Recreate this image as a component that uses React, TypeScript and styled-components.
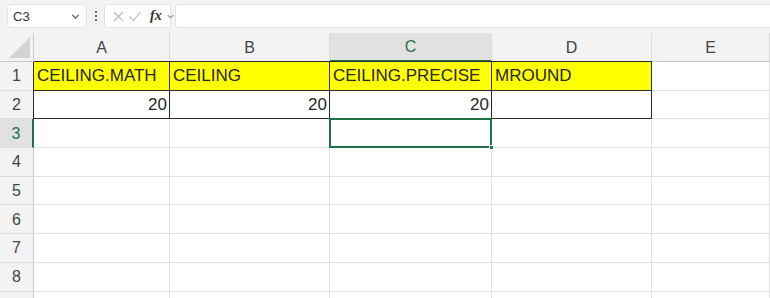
import React from "react";
import styled, { createGlobalStyle, css } from "styled-components";

const GlobalStyle = createGlobalStyle`
  html, body {
    margin: 0;
    padding: 0;
    background: #ffffff;
    font-family: "Liberation Sans", Arial, sans-serif;
    overflow: hidden;
  }
`;

const GREEN = "#1e7145";

const Page = styled.div`
  width: 770px;
  height: 298px;
  display: flex;
  flex-direction: column;
  overflow: hidden;
`;

// formula bar
const Toolbar = styled.div`
  height: 33px;
  flex: 0 0 33px;
  box-sizing: border-box;
  background: #f3f3f3;
  display: flex;
  align-items: flex-start;
  padding: 4px 0 0 7px;
`;

const NameBox = styled.div`
  width: 80px;
  height: 24px;
  box-sizing: border-box;
  background: #fff;
  border: 1px solid #e3e3e3;
  border-radius: 4px;
  display: flex;
  align-items: center;
  justify-content: space-between;
  padding: 0 5px 0 5px;
  font-size: 13px;
  color: #333;
`;

const Dots = styled.div`
  width: 17px;
  height: 24px;
  display: flex;
  flex-direction: column;
  align-items: center;
  justify-content: center;
  gap: 2px;
  span {
    width: 2px;
    height: 2px;
    border-radius: 1px;
    background: #444;
  }
`;

const FxBox = styled.div`
  width: 67px;
  height: 24px;
  box-sizing: border-box;
  background: #fff;
  border: 1px solid #e3e3e3;
  border-radius: 4px;
  display: flex;
  align-items: center;
  padding: 0 0 0 8px;
  gap: 5px;
  svg { display: block; flex: none; }
`;

const Fx = styled.span`
  font-family: "Liberation Serif", "Times New Roman", serif;
  font-style: italic;
  font-weight: bold;
  font-size: 14px;
  color: #333;
  margin-left: 4px;
  margin-right: -1px;
`;

const FormulaInput = styled.div`
  flex: 1;
  height: 24px;
  margin-left: 4px;
  box-sizing: border-box;
  background: #fff;
  border: 1px solid #e3e3e3;
  border-right: none;
  border-radius: 4px 0 0 4px;
`;

// sheet
const Sheet = styled.div`
  flex: 1;
  display: grid;
  grid-template-columns: 34px 136px 160px 162px 160px 1fr;
  grid-template-rows: 29px;
  grid-auto-rows: 28.7px;
  background: #fff;
`;

const Corner = styled.div`
  background: #f3f3f3;
  border-right: 1px solid #c8c8c8;
  border-bottom: 1px solid #c8c8c8;
  display: flex;
  align-items: flex-end;
  justify-content: flex-end;
  padding: 0 3px 3px 0;
  svg { display: block; }
`;

const ColHeader = styled.div<{ $active?: boolean }>`
  background: ${(p) => (p.$active ? "#e1e1e1" : "#f3f3f3")};
  color: ${(p) => (p.$active ? GREEN : "#444")};
  border-right: 1px solid #dcdcdc;
  border-bottom: ${(p) => (p.$active ? `2px solid ${GREEN}` : "1px solid #c8c8c8")};
  display: flex;
  align-items: center;
  justify-content: center;
  font-size: 16px;
  padding-top: 1px;
`;

const RowHeader = styled.div<{ $active?: boolean }>`
  background: ${(p) => (p.$active ? "#e1e1e1" : "#f3f3f3")};
  color: ${(p) => (p.$active ? GREEN : "#444")};
  border-right: ${(p) => (p.$active ? `2px solid ${GREEN}` : "1px solid #c8c8c8")};
  border-bottom: 1px solid #dcdcdc;
  display: flex;
  align-items: center;
  justify-content: center;
  font-size: 16px;
  padding-top: 1px;
`;

const Cell = styled.div<{ $fill?: boolean; $boxed?: boolean; $right?: boolean; $selected?: boolean }>`
  position: relative;
  box-sizing: border-box;
  border-right: 1px solid #e1e1e1;
  border-bottom: 1px solid #e1e1e1;
  display: flex;
  align-items: center;
  justify-content: ${(p) => (p.$right ? "flex-end" : "flex-start")};
  padding: 1px 2px 0 3px;
  font-size: 17px;
  color: #262626;
  white-space: nowrap;
  background: ${(p) => (p.$fill ? "#ffff00" : "#fff")};
  ${(p) =>
    p.$boxed &&
    css`
      border-right-color: #2b2b2b;
      border-bottom-color: #2b2b2b;
      box-shadow: -1px 0 0 #2b2b2b, 0 -1px 0 #2b2b2b;
    `}
  ${(p) =>
    p.$selected &&
    css`
      &::after {
        content: "";
        position: absolute;
        left: -1px;
        top: -1px;
        right: -1px;
        bottom: -1px;
        border: 2px solid ${GREEN};
        pointer-events: none;
      }
      &::before {
        content: "";
        position: absolute;
        right: -3px;
        bottom: -3px;
        width: 5px;
        height: 5px;
        background: ${GREEN};
        border: 1px solid #fff;
        box-sizing: border-box;
        z-index: 2;
      }
    `}
`;

const Chevron = ({ size = 10 }: { size?: number }) => (
  <svg width={size} height={size} viewBox="0 0 10 10">
    <path d="M2 3.5 L5 6.5 L8 3.5" fill="none" stroke="#555" strokeWidth="1.1" />
  </svg>
);

const columns = ["A", "B", "C", "D", "E"];

type CellData = { text?: string; fill?: boolean; boxed?: boolean; right?: boolean };

const data: Record<number, CellData[]> = {
  1: [
    { text: "CEILING.MATH", fill: true, boxed: true },
    { text: "CEILING", fill: true, boxed: true },
    { text: "CEILING.PRECISE", fill: true, boxed: true },
    { text: "MROUND", fill: true, boxed: true },
    {},
  ],
  2: [
    { text: "20", boxed: true, right: true },
    { text: "20", boxed: true, right: true },
    { text: "20", boxed: true, right: true },
    { boxed: true },
    {},
  ],
};

// row 9 only peeks in at the bottom edge, its label is out of view
const rows = [1, 2, 3, 4, 5, 6, 7, 8, 9];

export default function App() {
  return (
    <Page>
      <GlobalStyle />
      <Toolbar>
        <NameBox>
          <span>C3</span>
          <Chevron size={11} />
        </NameBox>
        <Dots>
          <span />
          <span />
          <span />
        </Dots>
        <FxBox>
          <svg width="11" height="11" viewBox="0 0 11 11">
            <path d="M1 1 L10 10 M10 1 L1 10" stroke="#b8b8b8" strokeWidth="1.1" fill="none" />
          </svg>
          <svg width="12" height="11" viewBox="0 0 12 11">
            <path d="M0.5 5.5 L4.5 9.5 L11.5 1" stroke="#b8b8b8" strokeWidth="1.1" fill="none" />
          </svg>
          <Fx>fx</Fx>
          <Chevron size={9} />
        </FxBox>
        <FormulaInput />
      </Toolbar>
      <Sheet>
        <Corner>
          <svg width="21" height="21" viewBox="0 0 21 21">
            <path d="M21 0 L21 21 L0 21 Z" fill="#d3d3d3" />
          </svg>
        </Corner>
        {columns.map((c) => (
          <ColHeader key={c} $active={c === "C"}>
            {c}
          </ColHeader>
        ))}
        {rows.map((r) => (
          <React.Fragment key={r}>
            <RowHeader $active={r === 3}>{r < 9 ? r : ""}</RowHeader>
            {columns.map((c, i) => {
              const d = data[r]?.[i] ?? {};
              return (
                <Cell
                  key={c}
                  $fill={d.fill}
                  $boxed={d.boxed}
                  $right={d.right}
                  $selected={r === 3 && c === "C"}
                >
                  {d.text}
                </Cell>
              );
            })}
          </React.Fragment>
        ))}
      </Sheet>
    </Page>
  );
}
